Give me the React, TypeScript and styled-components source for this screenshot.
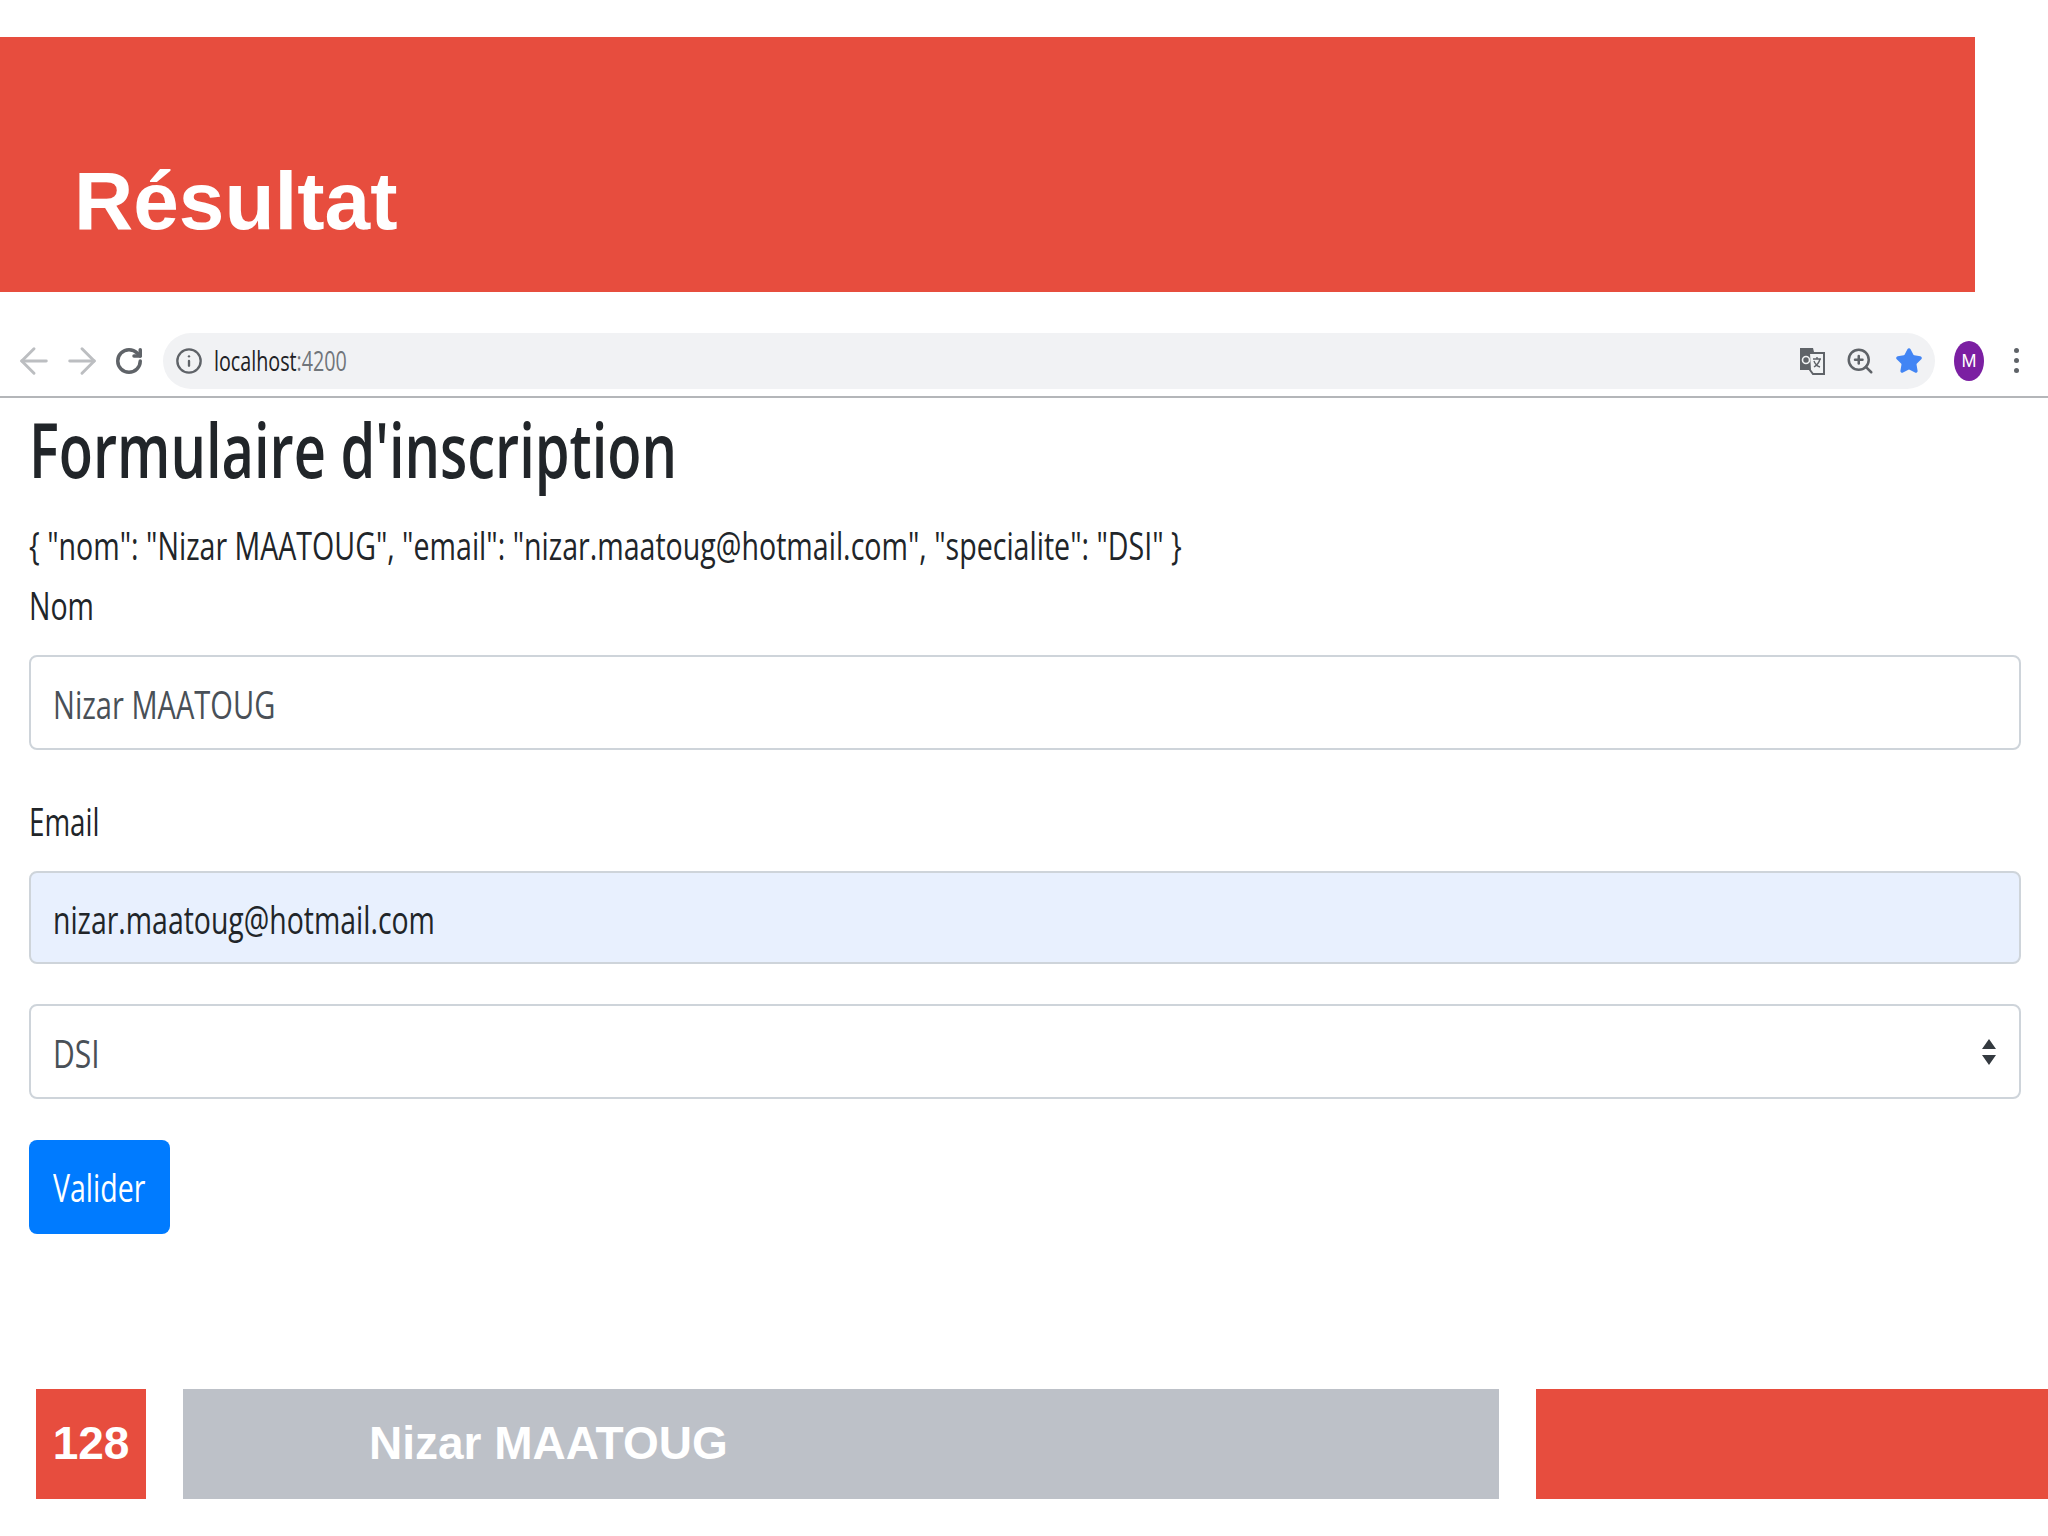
import React from 'react';
import styled, { createGlobalStyle } from 'styled-components';
import { ArrowLeft, ArrowRight, RotateCw, Info, ZoomIn, Star } from 'lucide-react';

const COLORS = {
  RED: '#e74d3e',
  GRAY: '#bdc1c8',
  INK: '#212529',
  MUTED: '#495057',
  BORDER: '#ced4da',
  BLUE: '#007bff',
};

const GlobalStyle = createGlobalStyle`
  html, body {
    margin: 0;
    padding: 0;
    background: #ffffff;
    overflow: hidden;
  }
`;

const Page = styled.div`
  width: 2048px;
  height: 1536px;
  display: flex;
  flex-direction: column;
  font-family: 'Open Sans', 'Liberation Sans', sans-serif;
  color: ${COLORS.INK};
`;

const Banner = styled.header`
  width: 1975px;
  height: 255px;
  margin-top: 37px;
  background: ${COLORS.RED};
  display: flex;
  align-items: flex-end;
  padding: 0 0 49px 74px;
  box-sizing: border-box;
`;

const BannerTitle = styled.h1`
  margin: 0;
  font: bold 82px/85px 'Liberation Sans', Arial, sans-serif;
  color: #ffffff;
`;

const Toolbar = styled.div`
  height: 65px;
  margin-top: 41px;
  padding: 0 20px 0 13px;
  box-sizing: border-box;
  border-bottom: 2px solid #b4b6b9;
  display: flex;
  align-items: flex-start;
`;

const NavIcons = styled.div`
  width: 150px;
  height: 56px;
  display: flex;
  align-items: center;
  gap: 6px;
  flex: none;
`;

const ReloadIcon = styled(RotateCw)`
  margin-left: 5px;
`;

const AddressBar = styled.div`
  width: 1772px;
  height: 56px;
  border-radius: 28px;
  background: #f1f2f4;
  display: flex;
  align-items: center;
  padding: 0 12px 0 12px;
  box-sizing: border-box;
  flex: none;
`;

const Url = styled.div`
  flex: 1;
  margin-left: 11px;
  padding-bottom: 2px;
  font-size: 27px;
  color: #202124;
`;

const Port = styled.span`
  color: #70757a;
`;

const BarIcons = styled.div`
  display: flex;
  align-items: center;
  gap: 20px;
`;

const Avatar = styled.div`
  width: 30px;
  height: 40px;
  margin: 8px 0 0 19px;
  border-radius: 50%;
  background: #7b1fa2;
  color: #ffffff;
  font: 18px/40px 'Liberation Sans', Arial, sans-serif;
  text-align: center;
  flex: none;
`;

const Kebab = styled.div`
  margin: 15px 0 0 30px;
  display: flex;
  flex-direction: column;
  gap: 5px;
  flex: none;
`;

const KebabDot = styled.span`
  width: 5px;
  height: 5px;
  border-radius: 50%;
  background: #5f6368;
`;

const Form = styled.main`
  padding: 0 27px 0 29px;
  display: flex;
  flex-direction: column;
`;

const Squeezed = styled.span<{ $scale?: number }>`
  display: inline-block;
  white-space: nowrap;
  transform: scaleX(${(p) => p.$scale ?? 0.75});
  transform-origin: left center;
`;

const Heading = styled.h2`
  margin: 0;
  height: 109px;
  font-size: 76px;
  line-height: 102px;
  font-weight: 600;
`;

const Preview = styled.div`
  height: 80px;
  font-size: 38px;
  line-height: 77px;
`;

const FieldLabel = styled.label<{ $height: number; $gap: number }>`
  display: block;
  height: ${(p) => p.$height}px;
  margin-bottom: ${(p) => p.$gap}px;
  font-size: 38px;
  line-height: ${(p) => p.$height - 3}px;
`;

const Field = styled.div<{ $filled?: boolean; $height: number; $gap: number }>`
  position: relative;
  height: ${(p) => p.$height}px;
  margin-bottom: ${(p) => p.$gap}px;
  padding: 2px 22px 0;
  box-sizing: border-box;
  display: flex;
  align-items: center;
  border: 2px solid ${COLORS.BORDER};
  border-radius: 8px;
  background: ${(p) => (p.$filled ? '#e8f0fe' : '#ffffff')};
  color: ${(p) => (p.$filled ? COLORS.INK : COLORS.MUTED)};
  font-size: 38px;
`;

const Caret = styled.svg`
  position: absolute;
  right: 22px;
  top: 33px;
`;

const SubmitButton = styled.button`
  width: 141px;
  height: 94px;
  padding: 0 0 0 24px;
  display: flex;
  align-items: center;
  border: none;
  border-radius: 8px;
  background: ${COLORS.BLUE};
  color: #ffffff;
  font-family: inherit;
  font-size: 38px;
`;

const Footer = styled.footer`
  height: 110px;
  margin: auto 0 37px;
  padding-left: 36px;
  display: flex;
  gap: 37px;
  font: bold 46px 'Liberation Sans', Arial, sans-serif;
  color: #ffffff;
`;

const PageNumber = styled.div`
  width: 110px;
  background: ${COLORS.RED};
  display: flex;
  align-items: center;
  justify-content: center;
  padding-bottom: 2px;
  box-sizing: border-box;
`;

const Author = styled.div`
  width: 1316px;
  background: ${COLORS.GRAY};
  display: flex;
  align-items: center;
  padding: 0 0 2px 186px;
  box-sizing: border-box;
`;

const Accent = styled.div`
  flex: 1;
  background: ${COLORS.RED};
`;

const TranslateIcon = () => (
  <svg width="26" height="30" viewBox="0 0 26 30">
    <path d="M1 2h13l1 4v18H1z" fill="#5f6368" />
    <path d="M10 7h15v21H14l-3-4z" fill="#f1f3f4" stroke="#5f6368" strokeWidth="2" />
    <circle cx="7" cy="14" r="3.5" fill="none" stroke="#f1f3f4" strokeWidth="1.6" />
    <path d="M14 13h8M18 11v2M21 13c-1 4-3 6-6 8M15 15c1 3 3 5 6 6" fill="none" stroke="#5f6368" strokeWidth="1.4" />
  </svg>
);

function App() {
  return (
    <Page>
      <GlobalStyle />
      <Banner>
        <BannerTitle>Résultat</BannerTitle>
      </Banner>

      <Toolbar>
        <NavIcons>
          <ArrowLeft size={42} color="#bcbec1" strokeWidth={1.7} />
          <ArrowRight size={42} color="#bcbec1" strokeWidth={1.7} />
          <ReloadIcon size={30} color="#5f6368" strokeWidth={2.8} />
        </NavIcons>
        <AddressBar>
          <Info size={28} color="#5f6368" strokeWidth={2} />
          <Url>
            <Squeezed $scale={0.73}>
              localhost<Port>:4200</Port>
            </Squeezed>
          </Url>
          <BarIcons>
            <TranslateIcon />
            <ZoomIn size={30} color="#5f6368" strokeWidth={2} />
            <Star size={28} color="#4285f4" fill="#4285f4" />
          </BarIcons>
        </AddressBar>
        <Avatar>M</Avatar>
        <Kebab>
          <KebabDot />
          <KebabDot />
          <KebabDot />
        </Kebab>
      </Toolbar>

      <Form>
        <Heading>
          <Squeezed $scale={0.736}>Formulaire d'inscription</Squeezed>
        </Heading>
        <Preview>
          <Squeezed $scale={0.752}>{'{ "nom": "Nizar MAATOUG", "email": "nizar.maatoug@hotmail.com", "specialite": "DSI" }'}</Squeezed>
        </Preview>
        <FieldLabel $height={40} $gap={28}>
          <Squeezed>Nom</Squeezed>
        </FieldLabel>
        <Field $height={95} $gap={43}>
          <Squeezed $scale={0.765}>Nizar MAATOUG</Squeezed>
        </Field>
        <FieldLabel $height={60} $gap={18}>
          <Squeezed $scale={0.73}>Email</Squeezed>
        </FieldLabel>
        <Field $filled $height={93} $gap={40}>
          <Squeezed $scale={0.748}>nizar.maatoug@hotmail.com</Squeezed>
        </Field>
        <Field $height={95} $gap={41}>
          <Squeezed $scale={0.79}>DSI</Squeezed>
          <Caret width="16" height="26" viewBox="0 0 16 26">
            <path d="M8 0l7 10H1zM8 26L1 16h14z" fill="#343a40" />
          </Caret>
        </Field>
        <SubmitButton type="button">
          <Squeezed>Valider</Squeezed>
        </SubmitButton>
      </Form>

      <Footer>
        <PageNumber>128</PageNumber>
        <Author>Nizar MAATOUG</Author>
        <Accent />
      </Footer>
    </Page>
  );
}

export default App;
